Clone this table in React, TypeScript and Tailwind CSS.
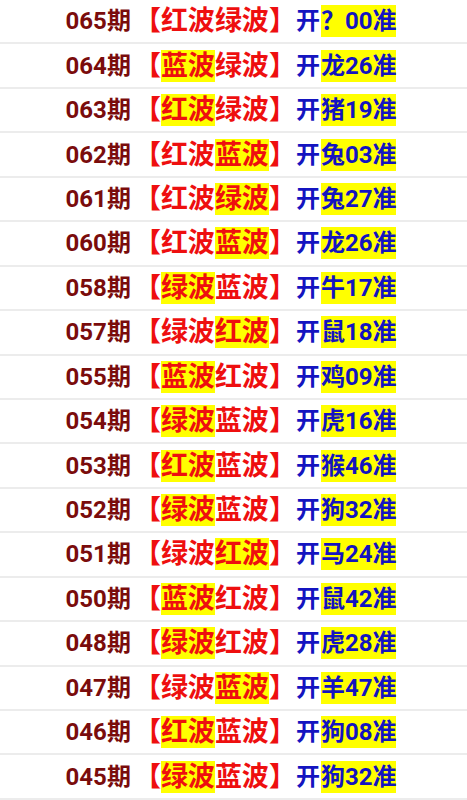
import React from "react";

type Row = { p: string; a: string; b: string; hl: 0 | 1 | 2; z: string; n: string };

const rows: Row[] = [
  { p: "065", a: "红波", b: "绿波", hl: 0, z: "？", n: "00" },
  { p: "064", a: "蓝波", b: "绿波", hl: 1, z: "龙", n: "26" },
  { p: "063", a: "红波", b: "绿波", hl: 1, z: "猪", n: "19" },
  { p: "062", a: "红波", b: "蓝波", hl: 2, z: "兔", n: "03" },
  { p: "061", a: "红波", b: "绿波", hl: 2, z: "兔", n: "27" },
  { p: "060", a: "红波", b: "蓝波", hl: 2, z: "龙", n: "26" },
  { p: "058", a: "绿波", b: "蓝波", hl: 1, z: "牛", n: "17" },
  { p: "057", a: "绿波", b: "红波", hl: 2, z: "鼠", n: "18" },
  { p: "055", a: "蓝波", b: "红波", hl: 1, z: "鸡", n: "09" },
  { p: "054", a: "绿波", b: "蓝波", hl: 1, z: "虎", n: "16" },
  { p: "053", a: "红波", b: "蓝波", hl: 1, z: "猴", n: "46" },
  { p: "052", a: "绿波", b: "蓝波", hl: 1, z: "狗", n: "32" },
  { p: "051", a: "绿波", b: "红波", hl: 2, z: "马", n: "24" },
  { p: "050", a: "蓝波", b: "红波", hl: 1, z: "鼠", n: "42" },
  { p: "048", a: "绿波", b: "红波", hl: 1, z: "虎", n: "28" },
  { p: "047", a: "绿波", b: "蓝波", hl: 2, z: "羊", n: "47" },
  { p: "046", a: "红波", b: "蓝波", hl: 1, z: "狗", n: "08" },
  { p: "045", a: "绿波", b: "蓝波", hl: 1, z: "狗", n: "32" },
];

const hlCls = "inline-block h-[32px] leading-[32px] bg-[#ffff00]";
const plainCls = "inline-block h-[32px] leading-[32px]";

export default function App() {
  return (
    <div
      className="w-[467px] h-[800px] overflow-hidden bg-white flex flex-col"
      style={{ fontFamily: 'Roboto, "Noto Sans CJK SC", "Noto Sans", sans-serif' }}
    >
      {rows.map((r) => (
        <div
          key={r.p}
          className="h-[44.45px] shrink-0 border-b-2 border-[#ececec] flex items-center justify-center pr-[5px] font-bold leading-[32px] whitespace-nowrap"
        >
          <span className="text-[24px] text-[#7a0c0c]">{r.p}期</span>
          <span className="text-[27px] text-[#ee0f0f] flex ml-[3px]">
            <span className={plainCls}>【</span>
            <span className={r.hl === 1 ? hlCls : plainCls}>{r.a}</span>
            <span className={r.hl === 2 ? hlCls : plainCls}>{r.b}</span>
            <span className={plainCls}>】</span>
          </span>
          <span className="text-[24px] text-[#1414c0] flex">
            <span className={plainCls + " mr-[1px]"}>开</span>
            <span className={hlCls}>
              {r.z}
              {r.n}准
            </span>
          </span>
        </div>
      ))}
    </div>
  );
}
